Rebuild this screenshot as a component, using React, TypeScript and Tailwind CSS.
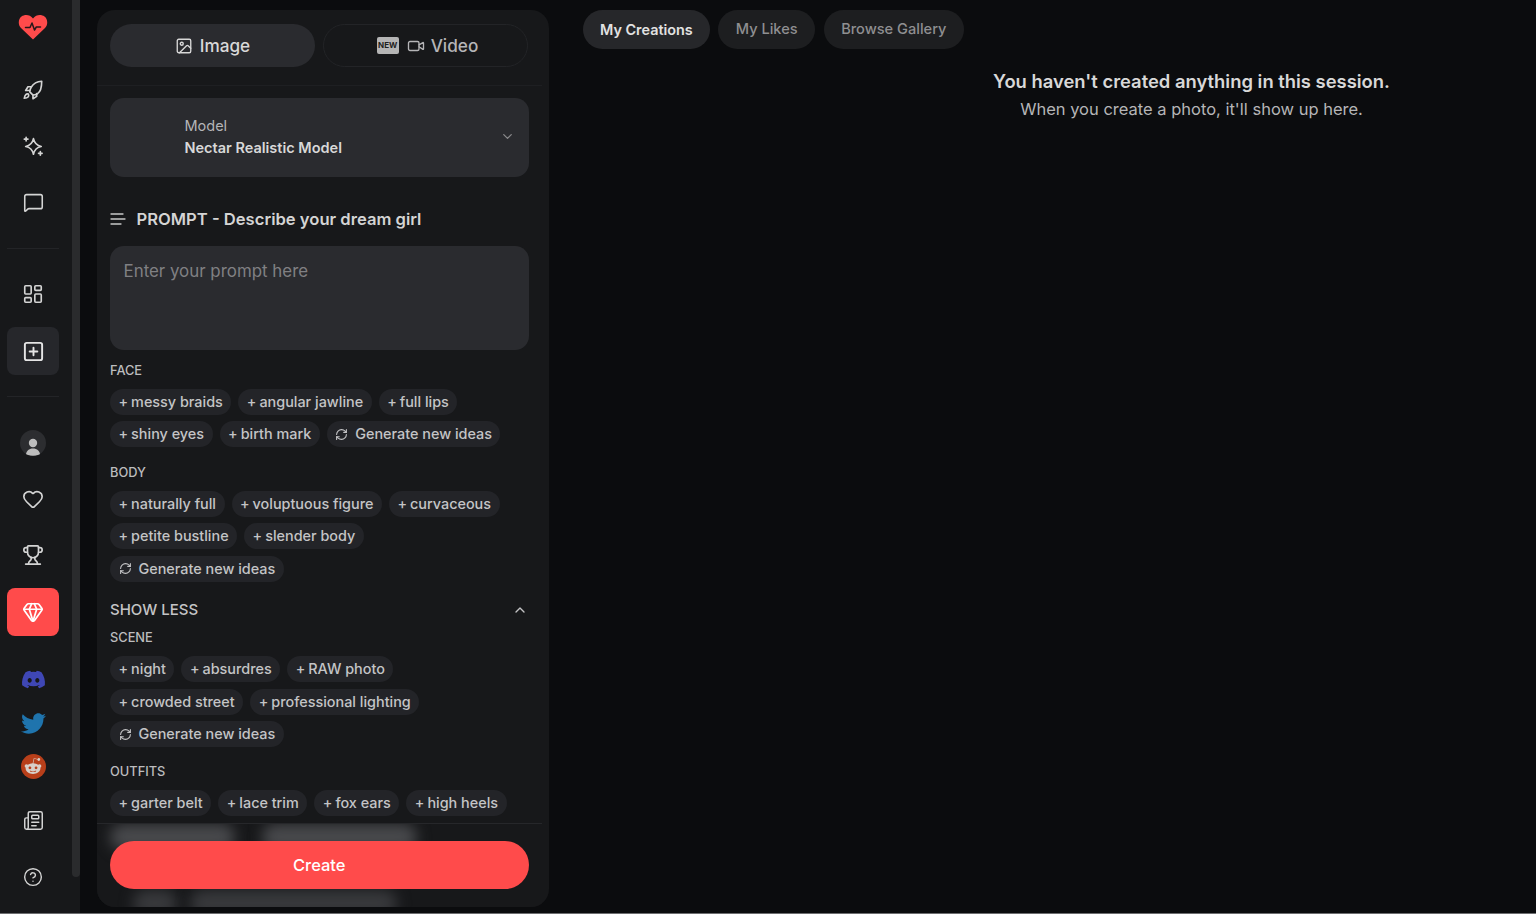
import {
  ChevronDown,
  ChevronUp,
  CircleHelp,
  Gem,
  Heart,
  Image as ImageIcon,
  LayoutDashboard,
  MessageSquare,
  Newspaper,
  RefreshCw,
  SquarePlus,
  Trophy,
  Video,
} from 'lucide-react'
import { FaDiscord, FaRedditAlien, FaTwitter } from 'react-icons/fa'

const font = { fontFamily: 'Inter, "Liberation Sans", sans-serif' }

function Logo() {
  return (
    <svg width="30" height="26" viewBox="0 0 30 26">
      <path
        d="M15 25.500 3 14C-.5 10.500.5 4.500 3.500 2.500 7 0 12 .5 15 4.500 18 .5 23 0 26.500 2.500c3 2 4 8 .5 11.500Z"
        fill="#ff4b4b"
      />
      <path d="M7.500 13.500h4.500l2-4.500 2.500 7 1.800-3h4.200" fill="none" stroke="#26181a" strokeWidth="1.500" strokeLinejoin="round" strokeLinecap="round" />
    </svg>
  )
}

function RocketIcon() {
  return (
    <svg width="22" height="22" viewBox="0 0 24 24" fill="none" stroke="currentColor" strokeWidth="1.800" strokeLinejoin="round" strokeLinecap="round">
      <path d="M21.500 2.500c-5 .3-9 2.500-11.500 6.500-1 1.800-1.500 3.500-1.500 5l3.500 3.500c1.500 0 3.200-.5 5-1.500 4-2.500 4.500-8 4.500-13.500Z" />
      <path d="M10 8.500H6.500L4 12.500h4.500" />
      <path d="M16 16v3l-4 2.500v-4" />
      <path d="M7 16.500c-2-.8-4 .5-4.500 4.500 4 0 5.500-2 4.500-4.500Z" />
    </svg>
  )
}

function SparkleIcon() {
  return (
    <svg width="22" height="22" viewBox="0 0 24 24" fill="none" stroke="currentColor" strokeWidth="1.800" strokeLinejoin="round" strokeLinecap="round">
      <path d="M12.500 4c1 4.800 3.200 7.500 8.500 8.500-5.300 1-7.500 3.700-8.500 8.500-1-4.800-3.200-7.500-8.500-8.500 5.300-1 7.500-3.700 8.500-8.500Z" />
      <path d="M4.500 2.500v4M2.500 4.500h4M20 18v4M18 20h4" />
    </svg>
  )
}

function LinesIcon() {
  return (
    <svg width="16" height="12" viewBox="0 0 16 12" stroke="#c8c8c8" strokeWidth="1.300" strokeLinecap="round">
      <path d="M1 1h12M1 6h14M1 11h10" />
    </svg>
  )
}

function RailItem({ children, className = '' }: { children: React.ReactNode; className?: string }) {
  return <div className={`w-[52px] flex items-center justify-center text-[#d4d4d4] ${className}`}>{children}</div>
}

function Sidebar() {
  return (
    <div className="w-[80px] h-[913px] shrink-0 bg-[#17181a] relative flex flex-col items-start pl-[7px]">
      {/* scrollbar */}
      <div className="absolute right-0 top-0 w-[8px] h-[877px] bg-[#2a2b2d] rounded-b-full" />
      <RailItem className="h-[26px] mt-[14px]"><Logo /></RailItem>
      <RailItem className="h-[24px] mt-[38px]"><RocketIcon /></RailItem>
      <RailItem className="h-[24px] mt-[32px]"><SparkleIcon /></RailItem>
      <RailItem className="h-[24px] mt-[32px]"><MessageSquare size={21} strokeWidth={1.8} /></RailItem>
      <div className="w-[52px] h-px bg-[#232427] mt-[34px]" />
      <RailItem className="h-[24px] mt-[33px]"><LayoutDashboard size={22} strokeWidth={1.8} /></RailItem>
      <RailItem className="h-[48px] mt-[21px] bg-[#26272b] rounded-lg text-[#e5e5e5]"><SquarePlus size={23} strokeWidth={2} /></RailItem>
      <div className="w-[52px] h-px bg-[#232427] mt-[21px]" />
      <RailItem className="h-[26px] mt-[33px]">
        <div className="w-[26px] h-[26px] rounded-full bg-[#2c2d30] flex items-end justify-center overflow-hidden">
          <svg width="16" height="20" viewBox="0 0 16 20" fill="#bdbdbd">
            <circle cx="8" cy="7" r="4.200" />
            <path d="M1 19c0-4 3-6.500 7-6.500s7 2.500 7 6.500c-2 1-12 1-14 0Z" />
          </svg>
        </div>
      </RailItem>
      <RailItem className="h-[24px] mt-[31px]"><Heart size={22} strokeWidth={1.8} /></RailItem>
      <RailItem className="h-[24px] mt-[32px]"><Trophy size={22} strokeWidth={1.8} /></RailItem>
      <RailItem className="h-[48px] mt-[21px] bg-[#ff4b4b] rounded-lg text-white"><Gem size={22} strokeWidth={1.9} /></RailItem>
      <RailItem className="h-[24px] mt-[31px]"><FaDiscord size={25} color="#3f47b5" /></RailItem>
      <RailItem className="h-[24px] mt-[20px]"><FaTwitter size={25} color="#1f74ad" /></RailItem>
      <RailItem className="h-[26px] mt-[18px]">
        <div className="w-[25px] h-[25px] rounded-full bg-[#b83f1a] flex items-center justify-center">
          <FaRedditAlien size={18} color="#d8cfc8" />
        </div>
      </RailItem>
      <RailItem className="h-[24px] mt-[29px]"><Newspaper size={21} strokeWidth={1.7} /></RailItem>
      <RailItem className="h-[24px] mt-[33px]"><CircleHelp size={20} strokeWidth={1.7} /></RailItem>
    </div>
  )
}

function Chip({ label, refresh }: { label: string; refresh?: boolean }) {
  return (
    <div className="h-[26px] px-[8.500px] rounded-full bg-[#232428] flex items-center text-[14.400px] font-medium text-[#c4c4c6] whitespace-nowrap">
      {refresh ? (
        <RefreshCw size={13} strokeWidth={2} className="mr-[7px]" />
      ) : (
        <span className="mr-[3px]">+</span>
      )}
      {label}
    </div>
  )
}

function ChipGroup({ title, chips, more = true, className = '' }: { title: string; chips: string[]; more?: boolean; className?: string }) {
  return (
    <div className={className}>
      <div className="text-[12.800px] font-medium leading-[16px] text-[#bcbcbe]">{title}</div>
      <div className="flex flex-wrap gap-x-[7px] gap-y-[6.500px] mt-[10px]">
        {chips.map((c) => (
          <Chip key={c} label={c} />
        ))}
        {more && <Chip label="Generate new ideas" refresh />}
      </div>
    </div>
  )
}

function Panel() {
  return (
    <div className="w-[452px] h-[897px] mt-[10px] ml-[17px] shrink-0 rounded-[18px] bg-[#17181a] relative overflow-hidden">
      <div className="h-[76px] flex gap-[8px] pl-[13px] pr-[14px] pt-[14px] mr-[7px] border-b border-[#1e1f22]">
        <div className="w-[205px] h-[43px] rounded-full bg-[#2a2b2f] flex items-center justify-center gap-[7px] text-[17.200px] font-medium text-[#d8d8d8]">
          <ImageIcon size={18} strokeWidth={1.8} />
          Image
        </div>
        <div className="w-[205px] h-[43px] rounded-full border border-[#232427] flex items-center justify-center text-[17.200px] font-medium text-[#b5b5b7]">
          <span className="w-[22px] h-[17px] ml-[4px] rounded-[2px] bg-[#b5b5b5] text-[#222] text-[8px] leading-[17px] font-bold text-center mr-[8px]">NEW</span>
          <Video size={18} strokeWidth={1.8} className="mr-[6px]" />
          Video
        </div>
      </div>
      <div className="pl-[13px] pr-[20.500px]">
        <div className="mt-[12px] h-[79px] pb-[2px] rounded-[14px] bg-[#2a2b2f] flex items-center pl-[74.500px] pr-[14px]">
          <div className="flex-1">
            <div className="text-[14.500px] leading-[22px] text-[#b5b5b7]">Model</div>
            <div className="text-[14.500px] leading-[22px] font-semibold text-[#d8d8d8]">Nectar Realistic Model</div>
          </div>
          <ChevronDown size={15} className="text-[#8a8a8c]" />
        </div>
        <div className="mt-[30px] h-[24px] flex items-center text-[#d4d4d4]">
          <LinesIcon />
          <span className="ml-[10.500px] text-[16.600px] font-semibold">PROMPT - Describe your dream girl</span>
        </div>
        <div className="mt-[15px] h-[104px] rounded-[14px] bg-[#2a2b2f] px-[13.500px] pt-[13px] text-[16.900px] leading-[24px] text-[#808083]">
          Enter your prompt here
        </div>
        <ChipGroup
          className="mt-[12.500px]"
          title="FACE"
          chips={['messy braids', 'angular jawline', 'full lips', 'shiny eyes', 'birth mark']}
        />
        <ChipGroup
          className="mt-[17.500px]"
          title="BODY"
          chips={['naturally full', 'voluptuous figure', 'curvaceous', 'petite bustline', 'slender body']}
        />
        <div className="mt-[16.500px] h-[24px] flex items-center justify-between text-[15px] font-medium text-[#c4c4c6]">
          SHOW LESS
          <ChevronUp size={16} className="mr-px" />
        </div>
        <ChipGroup
          className="mt-[8px]"
          title="SCENE"
          chips={['night', 'absurdres', 'RAW photo', 'crowded street', 'professional lighting']}
        />
        <ChipGroup
          className="mt-[17px]"
          title="OUTFITS"
          more={false}
          chips={['garter belt', 'lace trim', 'fox ears', 'high heels']}
        />
      </div>
      <div className="absolute left-0 right-[7px] bottom-0 h-[84px] overflow-hidden border-t border-[#26272a] bg-[#17181a] pl-[13px] pr-[13.500px] pt-[17px]">
        <div className="absolute left-[13px] top-0 w-[125px] h-[26px] rounded-full bg-[#48494c] blur-[7px]" />
        <div className="absolute left-[165px] top-0 w-[155px] h-[26px] rounded-full bg-[#48494c] blur-[7px]" />
        <div className="absolute left-[36px] top-[66px] w-[44px] h-[26px] rounded-full bg-[#38393c] blur-[7px]" />
        <div className="absolute left-[93px] top-[66px] w-[207px] h-[26px] rounded-full bg-[#38393c] blur-[7px]" />
        <div className="relative h-[48px] rounded-full bg-[#ff4b4b] flex items-center justify-center text-[16.500px] font-medium text-white">
          Create
        </div>
      </div>
    </div>
  )
}

function Tab({ label, active }: { label: string; active?: boolean }) {
  return (
    <div
      className={`h-[39px] rounded-full flex items-center ${
        active
          ? 'px-[17px] bg-[#26272a] text-[14.400px] text-[#e2e2e2] font-semibold'
          : 'px-[17.500px] bg-[#1d1e20] text-[14.600px] font-medium text-[#8f8f91]'
      }`}
    >
      {label}
    </div>
  )
}

export default function App() {
  return (
    <div style={font} className="w-[1536px] h-[914px] overflow-hidden bg-[#0b0c0e] border-b border-[#6d6e70] flex">
      <Sidebar />
      <Panel />
      <div className="flex-1 pl-[34px] pt-[10px]">
        <div className="flex gap-[8.500px]">
          <Tab label="My Creations" active />
          <Tab label="My Likes" />
          <Tab label="Browse Gallery" />
        </div>
        <div className="mt-[19px] ml-[264px] text-center">
          <div className="text-[18.400px] leading-[26px] font-semibold text-[#d8d8d8]">You haven't created anything in this session.</div>
          <div className="mt-[2px] text-[16.500px] leading-[26px] text-[#b5b5b7]">When you create a photo, it'll show up here.</div>
        </div>
      </div>
    </div>
  )
}
